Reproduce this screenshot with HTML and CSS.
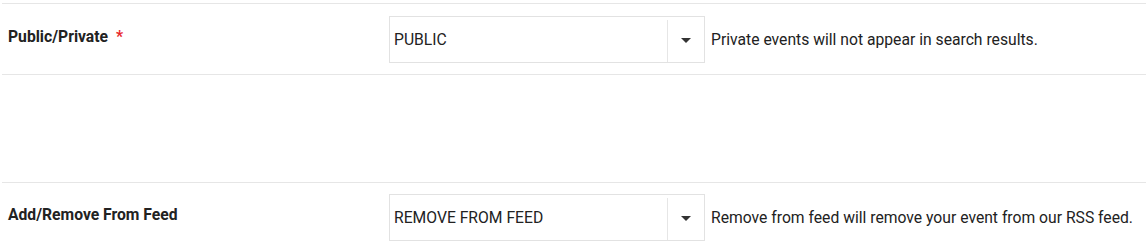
FILE: index.html
```html
<!DOCTYPE html>
<html>
<head>
<meta charset="utf-8">
<link rel="stylesheet" href="styles.css">
</head>
<body>
<div class="form">
  <div class="row">
    <div class="label">Public/Private <span class="req">*</span></div>
    <div class="select">
      <span class="value">PUBLIC</span>
      <span class="arrow"><span class="tri"></span></span>
    </div>
    <div class="help">Private events will not appear in search results.</div>
  </div>
  <div class="spacer"></div>
  <div class="row">
    <div class="label">Add/Remove From Feed</div>
    <div class="select">
      <span class="value">REMOVE FROM FEED</span>
      <span class="arrow"><span class="tri"></span></span>
    </div>
    <div class="help">Remove from feed will remove your event from our RSS feed.</div>
  </div>
</div>
</body>
</html>
```
FILE: styles.css
```css
html, body {
  margin: 0;
  padding: 0;
  background: #fff;
}
body {
  font-family: Roboto, "Liberation Sans", sans-serif;
  font-size: 15.7px;
  color: #222;
}
.form {
  padding-top: 3px;
  margin-left: 2px;
}
.row {
  display: grid;
  grid-template-columns: 381px 316px auto;
  column-gap: 6px;
  align-items: center;
  border-top: 1px solid #e6e6e6;
  border-bottom: 1px solid #e6e6e6;
  padding: 12px 0 11px;
}
.row + .spacer + .row {
  border-bottom: none;
  padding-top: 11px;
}
.spacer {
  height: 107px;
}
.label {
  align-self: start;
  padding-top: 11px;
  padding-left: 6px;
  font-weight: bold;
  color: #222;
}
.req {
  color: #e8282b;
  margin-left: 4px;
}
.select {
  box-sizing: border-box;
  display: flex;
  align-items: stretch;
  height: 47px;
  border: 1px solid #e2e2e2;
  background: #fff;
}
.value {
  flex: 1;
  display: flex;
  align-items: center;
  padding-left: 4px;
  color: #222;
}
.arrow {
  width: 36px;
  margin: 3px 0 0;
  border-left: 1px solid #e6e6e6;
  display: flex;
  align-items: center;
  justify-content: center;
}
.tri {
  width: 0;
  height: 0;
  border-left: 5px solid transparent;
  border-right: 5px solid transparent;
  border-top: 5px solid #333;
  margin-top: -2px;
}
.help {
  color: #222;
  white-space: nowrap;
}
```
